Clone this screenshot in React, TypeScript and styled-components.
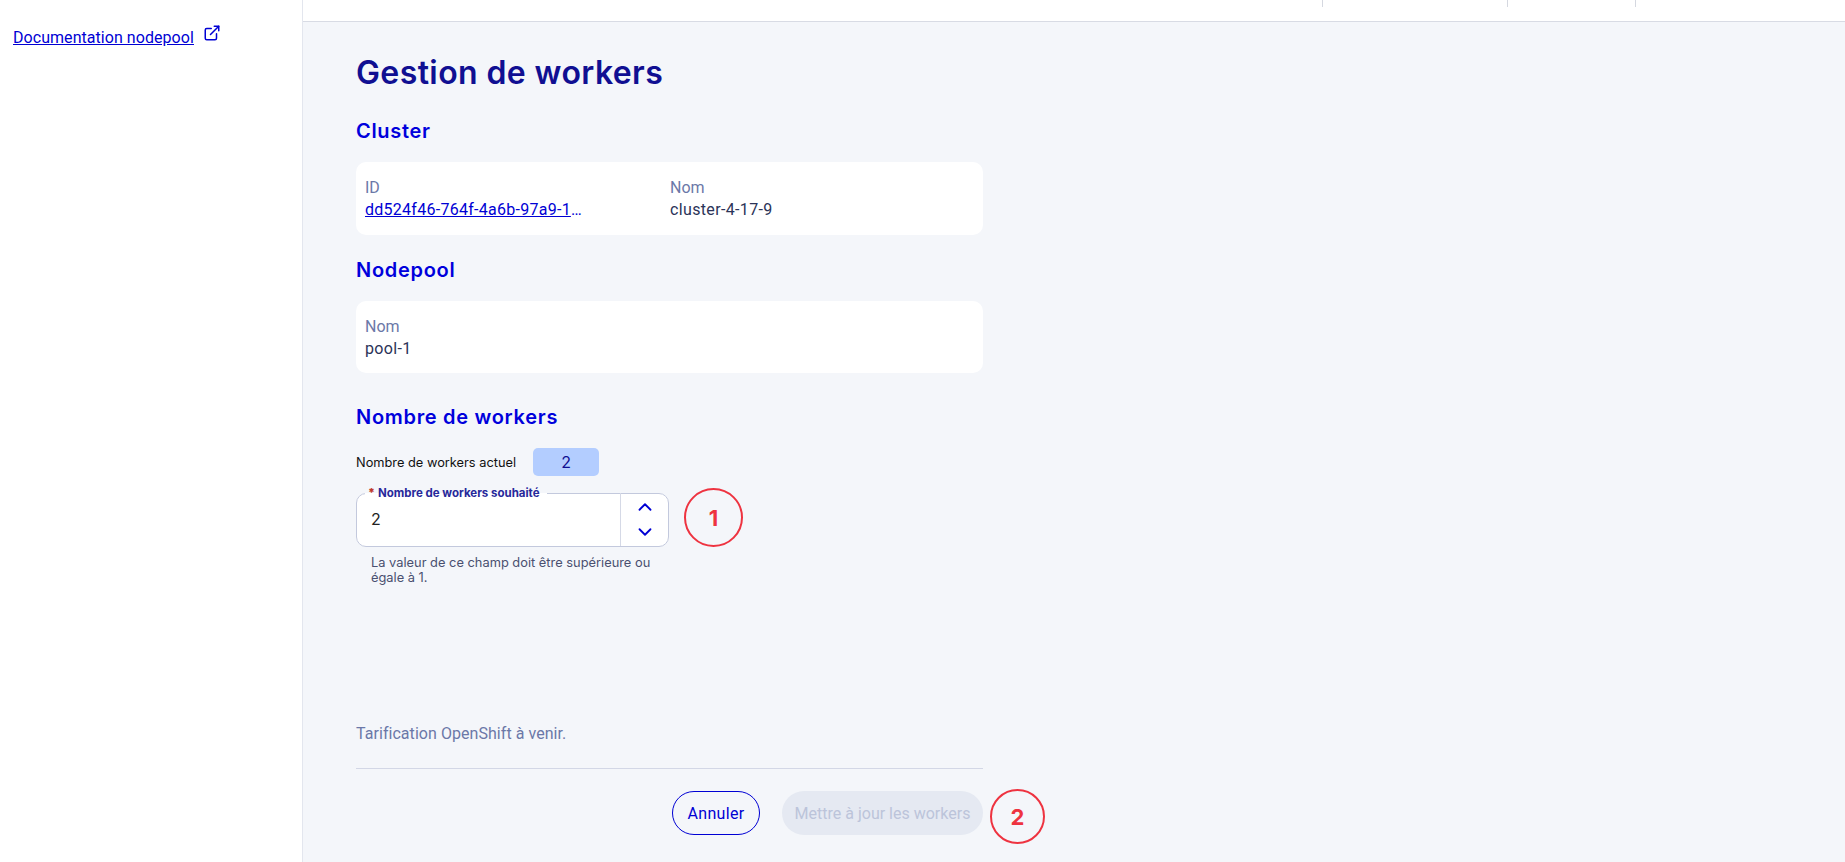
import styled, { createGlobalStyle } from "styled-components";
import { ChevronUp, ChevronDown, ExternalLink } from "lucide-react";

const GlobalStyle = createGlobalStyle`
  html, body {
    margin: 0;
    padding: 0;
    height: 100%;
    overflow: hidden;
    background: #f4f6fa;
    font-family: "Roboto", "Liberation Sans", sans-serif;
  }
`;

const Layout = styled.div`
  display: grid;
  grid-template-columns: 303px 1fr;
  height: 862px;
`;

// Sidebar
const Sidebar = styled.aside`
  background: #ffffff;
  border-right: 1px solid #e3e6ee;
  padding: 27px 13px;
  box-sizing: border-box;
`;

const DocLink = styled.a`
  display: flex;
  align-items: flex-start;
  gap: 9px;
  color: #0000d4;
  font-size: 16px;
  line-height: 22px;
  letter-spacing: 0.05px;

  span { text-decoration: underline; }
  svg { margin-top: -3px; }
`;

// Top bar
const Column = styled.div`
  display: flex;
  flex-direction: column;
  min-width: 0;
`;

const TopBar = styled.div`
  height: 21px;
  flex: none;
  background: #ffffff;
  border-bottom: 1px solid #d8dbe4;
  display: flex;
  justify-content: flex-end;
  padding-right: 208px;
`;

const TopCell = styled.div<{ $width: number }>`
  width: ${({ $width }) => $width}px;
  height: 7px;
  border-left: 1px solid #d5d8e0;
`;

// Main content
const Main = styled.main`
  width: 627px;
  margin-left: 53px;
  display: flex;
  flex-direction: column;
`;

const Title = styled.h1`
  margin: 32px 0 0;
  font-family: "Inter", sans-serif;
  font-size: 32px;
  line-height: 38px;
  font-weight: 600;
  letter-spacing: 0.4px;
  color: #100f92;
`;

const SectionTitle = styled.h2<{ $top: number }>`
  margin: ${({ $top }) => $top}px 0 0;
  font-family: "Inter", sans-serif;
  font-size: 20px;
  line-height: 26px;
  font-weight: 600;
  letter-spacing: 0.7px;
  color: #0000dc;
`;

const Card = styled.section<{ $height: number }>`
  margin-top: 18px;
  background: #ffffff;
  border-radius: 10px;
  padding: 15px 9px 0;
  height: ${({ $height }) => $height}px;
  box-sizing: border-box;
  display: grid;
  grid-template-columns: 305px 1fr;
`;

const Field = styled.div`
  display: flex;
  flex-direction: column;
  gap: 0;
  font-size: 16px;
  line-height: 22px;
`;

const FieldLabel = styled.span`
  color: #6b78a8;
`;

const FieldValue = styled.span`
  color: #2b3358;
  letter-spacing: 0.35px;
`;

const IdLink = styled.a`
  color: #0000d4;
  text-decoration: underline;
  letter-spacing: 0.27px;
  width: 218px;
  overflow: hidden;
  white-space: nowrap;
  text-overflow: ellipsis;
`;

const CurrentRow = styled.div`
  margin-top: 18px;
  display: flex;
  align-items: center;
  gap: 17px;
  font-family: "Inter", sans-serif;
  font-size: 12.8px;
  color: #111111;
`;

const Chip = styled.div`
  width: 66px;
  height: 28px;
  border-radius: 5px;
  background: #b3cdff;
  color: #100f92;
  font-size: 16px;
  display: flex;
  align-items: center;
  justify-content: center;
`;

const InputRow = styled.div`
  margin-top: 12px;
  display: flex;
  align-items: center;
  gap: 15px;
`;

const InputBox = styled.fieldset`
  margin: 0;
  padding: 0 0 0 14px;
  width: 313px;
  height: 59px;
  box-sizing: border-box;
  background: #ffffff;
  border: 1px solid #c3c9dd;
  border-radius: 10px;
  display: flex;
  align-items: center;
  position: relative;
  font-family: "Inter", sans-serif;

  legend {
    margin-left: -6px;
    padding: 0 7px 0 3px;
    font-size: 11.5px;
    line-height: 11px;
    font-weight: 700;
    color: #27289a;

    b { color: #c0392b; margin-right: 3px; }
  }
`;

const InputValue = styled.span`
  flex: 1;
  font-size: 16px;
  color: #222222;
  margin-top: -8px;
`;

const Stepper = styled.div`
  width: 47px;
  height: 53px;
  margin-top: -6px;
  border-left: 1px solid #d5d9e6;
  display: flex;
  flex-direction: column;
  align-items: center;
  justify-content: center;
  gap: 3px;
  color: #0000d4;
`;

const Marker = styled.div<{ $size: number }>`
  width: ${({ $size }) => $size}px;
  height: ${({ $size }) => $size}px;
  flex: none;
  box-sizing: border-box;
  border: 2px solid #ee3340;
  border-radius: 50%;
  color: #ee3340;
  font-family: "Inter", sans-serif;
  font-size: 22px;
  font-weight: 700;
  display: flex;
  align-items: center;
  justify-content: center;
`;

const HelpText = styled.p`
  margin: 8px 0 0 15px;
  width: 300px;
  font-family: "Inter", sans-serif;
  font-size: 12.85px;
  line-height: 15px;
  color: #4a5070;
`;

const PriceNote = styled.p`
  margin: 138px 0 0;
  font-size: 16px;
  line-height: 22px;
  letter-spacing: 0.05px;
  color: #6b78a8;
`;

const Divider = styled.hr`
  margin: 23px 0 0;
  border: 0;
  border-top: 1px solid #d3d7e6;
`;

const Actions = styled.div`
  position: relative;
  margin-top: 22px;
  display: flex;
  justify-content: flex-end;
  gap: 22px;

  ${Marker} {
    position: absolute;
    left: 634px;
    top: -2px;
  }
`;

const OutlineButton = styled.button`
  width: 88px;
  height: 44px;
  border: 1px solid #0000d4;
  border-radius: 22px;
  background: transparent;
  color: #0000d4;
  font-family: "Roboto", sans-serif;
  font-size: 16px;
  letter-spacing: 0.3px;
`;

const DisabledButton = styled.button`
  width: 201px;
  height: 44px;
  border: 0;
  border-radius: 22px;
  background: #e5e9f2;
  color: #bcc4da;
  font-family: "Roboto", sans-serif;
  font-size: 16px;
`;

export default function App() {
  return (
    <>
      <GlobalStyle />
      <Layout>
        <Sidebar>
          <DocLink href="#">
            <span>Documentation nodepool</span>
            <ExternalLink size={18} />
          </DocLink>
        </Sidebar>
        <Column>
          <TopBar>
            <TopCell $width={184} />
            <TopCell $width={127} />
            <TopCell $width={1} />
          </TopBar>
          <Main>
            <Title>Gestion de workers</Title>
            <SectionTitle $top={26}>Cluster</SectionTitle>
            <Card $height={73}>
              <Field>
                <FieldLabel>ID</FieldLabel>
                <IdLink href="#">dd524f46-764f-4a6b-97a9-1c3e8f02b7d4</IdLink>
              </Field>
              <Field>
                <FieldLabel>Nom</FieldLabel>
                <FieldValue>cluster-4-17-9</FieldValue>
              </Field>
            </Card>
            <SectionTitle $top={22}>Nodepool</SectionTitle>
            <Card $height={72}>
              <Field>
                <FieldLabel>Nom</FieldLabel>
                <FieldValue>pool-1</FieldValue>
              </Field>
            </Card>
            <SectionTitle $top={31}>Nombre de workers</SectionTitle>
            <CurrentRow>
              Nombre de workers actuel
              <Chip>2</Chip>
            </CurrentRow>
            <InputRow>
              <InputBox>
                <legend>
                  <b>*</b>Nombre de workers souhaité
                </legend>
                <InputValue>2</InputValue>
                <Stepper>
                  <ChevronUp size={22} />
                  <ChevronDown size={22} />
                </Stepper>
              </InputBox>
              <Marker $size={59}>1</Marker>
            </InputRow>
            <HelpText>La valeur de ce champ doit être supérieure ou égale à 1.</HelpText>
            <PriceNote>Tarification OpenShift à venir.</PriceNote>
            <Divider />
            <Actions>
              <OutlineButton>Annuler</OutlineButton>
              <DisabledButton disabled>Mettre à jour les workers</DisabledButton>
              <Marker $size={55}>2</Marker>
            </Actions>
          </Main>
        </Column>
      </Layout>
    </>
  );
}
